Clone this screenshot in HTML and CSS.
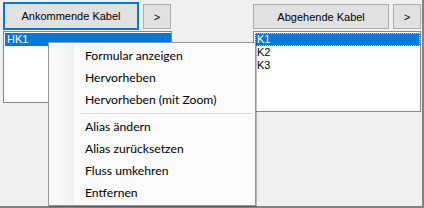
FILE: index.html
```html
<!DOCTYPE html>
<html lang="de">
  <head>
    <meta charset="UTF-8" />
    <title>Kabel</title>
    <link rel="stylesheet" href="styles.css">
  </head>
  <body>
    <div class="fenster">
      <div class="spalte spalte-links">
        <div class="knopf-reihe">
          <button class="knopf knopf-haupt aktiv">Ankommende Kabel</button>
          <button class="knopf knopf-klein">&gt;</button>
        </div>
        <ul class="liste liste-links">
          <li class="gewaehlt">HK1</li>
        </ul>
      </div>
      <div class="spalte spalte-rechts">
        <div class="knopf-reihe">
          <button class="knopf knopf-haupt">Abgehende Kabel</button>
          <button class="knopf knopf-klein">&gt;</button>
        </div>
        <ul class="liste liste-rechts">
          <li class="gewaehlt fokus">K1</li>
          <li>K2</li>
          <li>K3</li>
        </ul>
      </div>

      <div class="menue">
        <div class="menue-rand"></div>
        <ul class="menue-eintraege">
          <li>Formular anzeigen</li>
          <li>Hervorheben</li>
          <li>Hervorheben (mit Zoom)</li>
          <li class="trenner"></li>
          <li>Alias ändern</li>
          <li>Alias zurücksetzen</li>
          <li>Fluss umkehren</li>
          <li>Entfernen</li>
        </ul>
      </div>
    </div>
  </body>
</html>
```

FILE: styles.css
```css
* {
  margin: 0;
  padding: 0;
  box-sizing: border-box;
}

body {
  background: #f0f0f0;
  font-family: "Liberation Sans", Arial, sans-serif;
  font-size: 11px;
}

.fenster {
  position: relative;
  display: flex;
  gap: 81px;
  width: 424px;
  height: 208px;
  padding: 4px 0 0 3px;
  border-right: 2px solid #828282;
  border-bottom: 2px solid #828282;
}

.spalte {
  display: flex;
  flex-direction: column;
  width: 169px;
}

.spalte-rechts {
  width: 168px;
}

.knopf-reihe {
  display: flex;
  gap: 4px;
  height: 25px;
  margin-bottom: 2px;
}

.knopf {
  height: 25px;
  background: #e1e1e1;
  border: 1px solid #adadad;
  font-family: "Liberation Sans", Arial, sans-serif;
  font-size: 11px;
  color: #000;
}

.knopf-haupt {
  width: 137px;
}

.knopf-klein {
  width: 28px;
}

.spalte-links .knopf-haupt {
  width: 136px;
}

.knopf.aktiv {
  height: 28px;
  margin-top: -2px;
  border: 2px solid #0078d7;
}

.liste {
  list-style: none;
  background: #fff;
  border: 1px solid #828790;
  padding: 1px 0 0 1px;
}

.liste-links {
  height: 72px;
}

.liste-rechts {
  height: 81px;
}

.liste li {
  height: 13px;
  line-height: 13px;
  padding-left: 2px;
  color: #000;
}

.liste li.gewaehlt {
  background: #0078d7;
  color: #fff;
}

.liste li.fokus {
  outline: 1px dotted #b9d7f3;
  outline-offset: -1px;
}

/* Kontextmenue liegt ueber den Listen */
.menue {
  position: absolute;
  left: 48px;
  top: 42px;
  width: 208px;
  height: 164px;
  display: flex;
  background: #fcfcfc;
  border: 1px solid #979797;
  box-shadow: 1px 1px 0 rgba(0, 0, 0, 0.25);
  font-family: Lato, "Open Sans", sans-serif;
  font-size: 12.2px;
  color: #000;
}

.menue-rand {
  position: absolute;
  left: 0;
  top: 0;
  bottom: 0;
  width: 25px;
  background: linear-gradient(90deg, #fcfcfc, #f1f1f1);
}

.menue-eintraege {
  list-style: none;
  width: 100%;
  padding-top: 2px;
  position: relative;
}

.menue-eintraege li {
  height: 22px;
  line-height: 22px;
  padding-left: 36px;
}

.menue-eintraege li.trenner {
  height: 5px;
  margin-left: 32px;
  margin-right: 2px;
  padding: 0;
  border-top: 2px solid #fcfcfc;
  background: linear-gradient(#d7d7d7 0 1px, #fff 1px 2px, transparent 2px);
}
```
